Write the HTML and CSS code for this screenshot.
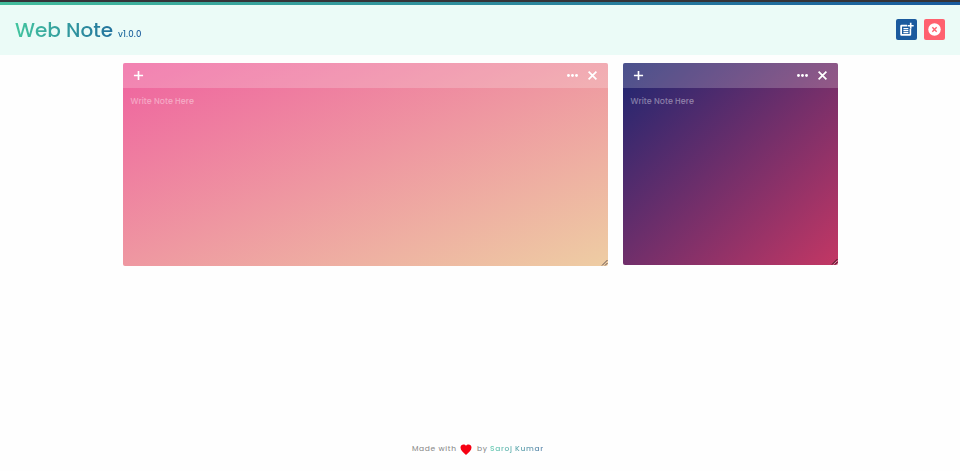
FILE: index.html
```html
<!DOCTYPE html>
<html lang="en">
<head>
<meta charset="utf-8">
<title>Web Note</title>
<link rel="stylesheet" href="styles.css">
</head>
<body>
<svg width="0" height="0" class="sprite">
  <symbol id="plus" viewBox="0 0 24 24"><path d="M12 2v20M2 12h20" fill="none" stroke="currentColor" stroke-width="3.6"/></symbol>
  <symbol id="dots" viewBox="0 0 24 24"><g fill="currentColor"><circle cx="3.200" cy="12" r="3.100"/><circle cx="12" cy="12" r="3.100"/><circle cx="20.800" cy="12" r="3.100"/></g></symbol>
  <symbol id="cross" viewBox="0 0 24 24"><path d="M3.500 3.500l17 17M20.500 3.500l-17 17" fill="none" stroke="currentColor" stroke-width="3.8"/></symbol>
</svg>
<header class="header">
  <h1 class="brand"><span class="name">Web Note</span><span class="version">v1.0.0</span></h1>
  <div class="actions">
    <button class="btn add" aria-label="Add note"><svg width="15" height="15" viewBox="0 0 24 24" fill="currentColor"><path d="M17 19.2H4.8V7H13V4.5H4a2 2 0 0 0-2 2V20a2 2 0 0 0 2 2h13.500a2 2 0 0 0 2-2v-9H17z"/><path d="M17.400 1h2.600v3.600h3.500v2.600H20v3.600h-2.600V7.200h-3.500V4.600h3.500z"/><path d="M7 9.500h8v1.900H7zM7 12.700h8v1.900H7zM7 15.900h8v1.900H7z"/></svg></button>
    <button class="btn clear" aria-label="Remove all"><svg width="13" height="13" viewBox="0 0 24 24"><circle cx="12" cy="12" r="11.500" fill="#fff"/><path d="M8 8l8 8M16 8l-8 8" stroke="#ff616f" stroke-width="2.600"/></svg></button>
  </div>
</header>
<main class="notes">
  <section class="note pink">
    <div class="bar"><svg class="icon"><use href="#plus"/></svg><span class="tools"><svg class="icon"><use href="#dots"/></svg><svg class="icon"><use href="#cross"/></svg></span></div>
    <div class="body">Write Note Here</div>
    <svg class="grip" viewBox="0 0 7 7"><path d="M1 6.500L6.500 1M4 6.500L6.500 4"/></svg>
  </section>
  <section class="note purple">
    <div class="bar"><svg class="icon"><use href="#plus"/></svg><span class="tools"><svg class="icon"><use href="#dots"/></svg><svg class="icon"><use href="#cross"/></svg></span></div>
    <div class="body">Write Note Here</div>
    <svg class="grip" viewBox="0 0 7 7"><path class="dark" d="M1 6.500L6.500 1M4 6.500L6.500 4"/><path class="light" d="M2.500 6.500l4-4M5.500 6.500l1-1"/></svg>
  </section>
</main>
<footer class="footer"><span class="made">Made with</span><svg class="heart" viewBox="0 0 24 22"><path fill="#f60012" d="M12 22C6 16.500 1 12.600 1 7.200 1 3.400 3.800 1 7 1c2 0 3.900 1 5 2.700C13.100 2 15 1 17 1c3.200 0 6 2.400 6 6.200 0 5.400-5 9.300-11 14.800z"/></svg><span class="by">by</span><span class="author">Saroj Kumar</span></footer>
</body>
</html>
```
FILE: styles.css
```css
* { box-sizing: border-box; }
body {
  margin: 0;
  height: 471px;
  display: flex;
  flex-direction: column;
  overflow: hidden;
  background: #fefefe;
  font-family: Poppins, Inter, sans-serif;
}
body::before {
  content: "";
  flex: none;
  height: 5px;
  background: linear-gradient(#353338 0 2px, transparent 2px), linear-gradient(to right, #43bd9c, #185a9d);
}
.sprite { position: absolute; }
.header {
  flex: none;
  height: 49.5px;
  padding: 0 15px;
  display: flex;
  align-items: center;
  justify-content: space-between;
  background: #ebfbf7;
}
.brand {
  margin: 4px 0 0;
  display: flex;
  align-items: baseline;
  font-weight: 400;
  line-height: 30px;
  white-space: nowrap;
  color: transparent;
  background: linear-gradient(to right, #43c59f, #185a9d);
  background-clip: text;
  -webkit-background-clip: text;
}
.name { width: 103px; font-size: 20px; font-weight: 500; letter-spacing: 0; }
.version { font-size: 8.5px; font-weight: 500; letter-spacing: 0.1px; }
.actions { display: flex; gap: 7px; }
.btn {
  width: 21px;
  height: 21px;
  padding: 0;
  border: 0;
  border-radius: 2px;
  display: flex;
  align-items: center;
  justify-content: center;
  color: #fff;
}
.add { background: #1b5a9e; }
.clear { background: #ff616f; }
.notes {
  flex: 1;
  display: flex;
  justify-content: center;
  align-items: flex-start;
  gap: 15px;
  padding: 8px 0 0;
}
.note {
  position: relative;
  border-radius: 2px;
  overflow: hidden;
  transform: translate(0, 0);
}
.pink { width: 485px; height: 203px; background: linear-gradient(to bottom right, #ef629f, #eecda3); }
.purple { width: 215px; height: 202px; background: linear-gradient(to bottom right, #1d2671, #c33764); }
.bar {
  height: 25px;
  padding: 0 10px;
  display: flex;
  align-items: center;
  justify-content: space-between;
  color: #fff;
  background: rgba(255, 255, 255, 0.2);
}
.tools { display: flex; align-items: center; gap: 9px; }
.icon { width: 11px; height: 11px; display: block; }
.body {
  padding: 8px;
  font-size: 8px;
  line-height: 12px;
  font-weight: 500;
  letter-spacing: 0.05px;
  color: rgba(255, 255, 255, 0.4);
}
.grip {
  position: absolute;
  right: 0;
  bottom: 0;
  width: 7px;
  height: 7px;
  fill: none;
  stroke: #51454a;
  stroke-width: 0.9;
}
.dark { stroke: #2b101c; }
.light { stroke: #dba0b0; stroke-width: 0.8; }
.footer {
  flex: none;
  height: 44px;
  padding-left: 412px;
  display: flex;
  align-items: center;
  font-size: 7.5px;
  line-height: 12px;
  letter-spacing: 0.65px;
  white-space: nowrap;
  color: #858585;
}
.made { width: 48px; }
.heart { width: 12px; height: 11px; margin-right: 5px; }
.by { width: 13px; }
.author {
  font-weight: 500;
  color: transparent;
  background: linear-gradient(to right, #62cbb0, #5c84ab);
  background-clip: text;
  -webkit-background-clip: text;
}
```
